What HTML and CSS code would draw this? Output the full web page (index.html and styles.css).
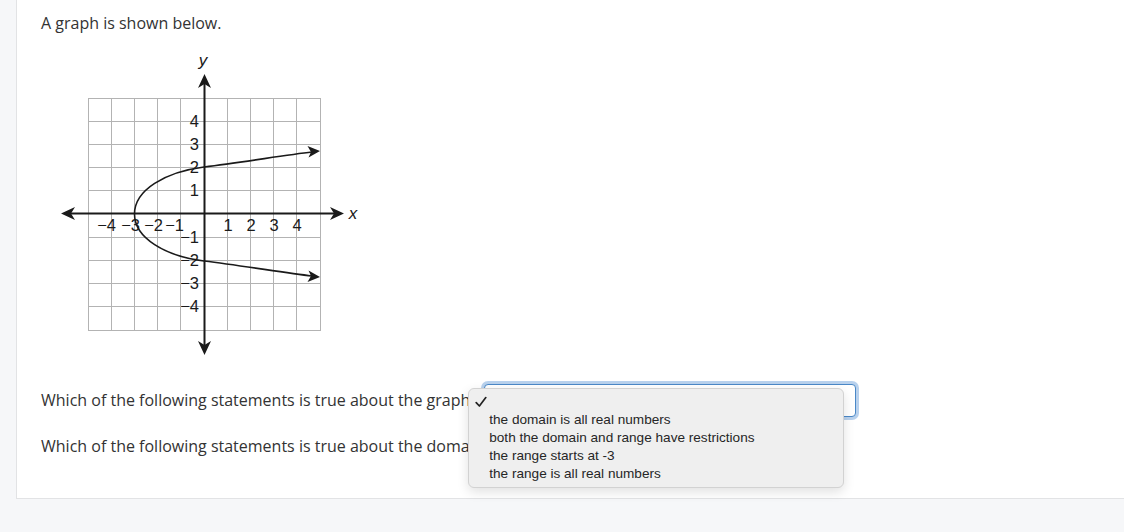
FILE: index.html
```html
<!DOCTYPE html>
<html>
<head>
<meta charset="utf-8">
<link rel="stylesheet" href="styles.css">
</head>
<body>
<div class="page">
  <div class="card">
    <p class="intro">A graph is shown below.</p>
    <svg class="graph" width="310" height="310" viewBox="56 46 310 310" xmlns="http://www.w3.org/2000/svg">
      <g stroke="#b3b3b3" stroke-width="1" fill="none">
        <rect x="88.5" y="98.5" width="232" height="232"/>
        <line x1="111.5" y1="98" x2="111.5" y2="331"/>
        <line x1="134.5" y1="98" x2="134.5" y2="331"/>
        <line x1="157.5" y1="98" x2="157.5" y2="331"/>
        <line x1="180.5" y1="98" x2="180.5" y2="331"/>
        <line x1="227.5" y1="98" x2="227.5" y2="331"/>
        <line x1="250.5" y1="98" x2="250.5" y2="331"/>
        <line x1="273.5" y1="98" x2="273.5" y2="331"/>
        <line x1="296.5" y1="98" x2="296.5" y2="331"/>
        <line x1="88" y1="121.5" x2="321" y2="121.5"/>
        <line x1="88" y1="144.5" x2="321" y2="144.5"/>
        <line x1="88" y1="167.5" x2="321" y2="167.5"/>
        <line x1="88" y1="190.5" x2="321" y2="190.5"/>
        <line x1="88" y1="237.5" x2="321" y2="237.5"/>
        <line x1="88" y1="260.5" x2="321" y2="260.5"/>
        <line x1="88" y1="283.5" x2="321" y2="283.5"/>
        <line x1="88" y1="306.5" x2="321" y2="306.5"/>
      </g>
      <g stroke="#1a1a1a" stroke-width="2" fill="none">
        <line x1="204.5" y1="82" x2="204.5" y2="347"/>
        <line x1="68" y1="213.5" x2="337" y2="213.5"/>
      </g>
      <g fill="#1a1a1a">
        <polygon points="204.5,74 211,88 204.5,84 198,88"/>
        <polygon points="204.5,355 211,341 204.5,345 198,341"/>
        <polygon points="61,213.5 75,207 71,213.5 75,220"/>
        <polygon points="344,213.5 330,207 334,213.5 330,220"/>
        <polygon points="320,151 307.5,146 311,152 308.5,157.5"/>
        <polygon points="320,277 307.5,282 311,276 308.5,270.5"/>
      </g>
      <g stroke="#1a1a1a" stroke-width="1.6" fill="none">
        <path d="M134.5,214 C134.5,190 165,172 204,167 C245,162 285,155 312,152"/>
        <path d="M134.5,214 C134.5,238 165,256 204,261 C245,266 285,273 312,276"/>
      </g>
      <g class="lbl" fill="#1a1a1a">
        <text x="203" y="66" text-anchor="middle" class="var">y</text>
        <text x="353" y="219" text-anchor="middle" class="var">x</text>
        <text x="116" y="231" text-anchor="end">−4</text>
        <text x="140" y="231" text-anchor="end">−3</text>
        <text x="163" y="231" text-anchor="end">−2</text>
        <text x="184" y="231" text-anchor="end">−1</text>
        <text x="228" y="231" text-anchor="middle">1</text>
        <text x="251" y="231" text-anchor="middle">2</text>
        <text x="274" y="231" text-anchor="middle">3</text>
        <text x="297" y="231" text-anchor="middle">4</text>
        <text x="199" y="127" text-anchor="end">4</text>
        <text x="199" y="150" text-anchor="end">3</text>
        <text x="199" y="173" text-anchor="end">2</text>
        <text x="199" y="196" text-anchor="end">1</text>
        <text x="199" y="243" text-anchor="end">−1</text>
        <text x="199" y="266" text-anchor="end">−2</text>
        <text x="199" y="289" text-anchor="end">−3</text>
        <text x="199" y="312" text-anchor="end">−4</text>
      </g>
    </svg>
    <div class="question">
      <span class="qtext">Which of the following statements is true about the graph</span>
      <div class="select-wrap">
        <div class="select"></div>
        <div class="menu">
          <div class="opt selected">
            <svg class="check" width="12" height="12" viewBox="0 0 12 12"><path d="M1.2 6.6 L4.4 10 L10.8 1.6" stroke="#222" stroke-width="1.7" fill="none" stroke-linecap="round" stroke-linejoin="round"/></svg>
          </div>
          <div class="opt">the domain is all real numbers</div>
          <div class="opt">both the domain and range have restrictions</div>
          <div class="opt">the range starts at -3</div>
          <div class="opt">the range is all real numbers</div>
        </div>
      </div>
    </div>
    <div class="question">
      <span class="qtext">Which of the following statements is true about the domain and range?</span>
    </div>
  </div>
</div>
</body>
</html>
```

FILE: styles.css
```css
html, body {
  margin: 0;
  padding: 0;
  background: #f6f7f9;
}
.page {
  padding-left: 16px;
  height: 532px;
  overflow: hidden;
}
.card {
  background: #ffffff;
  border-left: 1px solid #e2e3e5;
  border-bottom: 1px solid #e2e3e5;
  padding: 12px 24px 32px 24px;
  font-family: "Open Sans", "Liberation Sans", sans-serif;
  font-size: 16px;
  color: #333333;
}
.intro {
  margin: 0;
  line-height: 22px;
}
.graph {
  display: block;
  margin: 12px 0 0 15px;
}
.lbl text {
  font-family: "Liberation Sans", Arial, sans-serif;
  font-size: 16.5px;
}
.lbl .var {
  font-style: italic;
  font-size: 17px;
}
.question {
  display: flex;
  align-items: center;
  height: 40px;
  margin-top: 6px;
  line-height: 22px;
}
.graph + .question {
  margin-top: 24px;
}
.select-wrap {
  position: relative;
  margin-left: 14px;
}
.select {
  width: 370px;
  height: 31px;
  border: 1px solid #4a88c7;
  border-radius: 4px;
  box-shadow: 0 0 0 3px rgba(126, 172, 222, 0.55);
  background: #fff;
}
.menu {
  position: absolute;
  left: -16px;
  top: 4px;
  width: 374px;
  padding: 4px 0 4px 0;
  background: #efefef;
  border: 1px solid #d2d2d2;
  border-radius: 6px;
  box-shadow: 0 4px 12px rgba(0, 0, 0, 0.12);
  font-family: "Liberation Sans", Arial, sans-serif;
  font-size: 13.6px;
  color: #262626;
}
.opt {
  height: 18px;
  line-height: 18px;
  padding-left: 20px;
  white-space: nowrap;
}
.opt.selected {
  position: relative;
}
.check {
  position: absolute;
  left: 6px;
  top: 3px;
}
```
